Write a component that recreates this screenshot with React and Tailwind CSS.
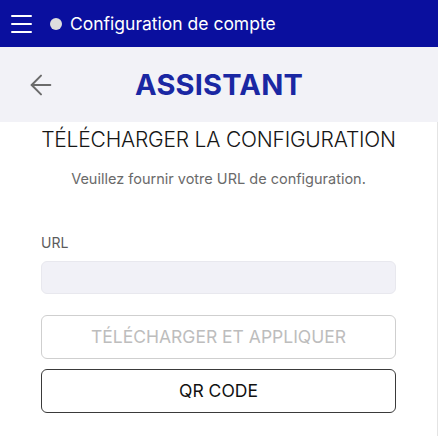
import React from 'react';
import { ArrowLeft } from 'lucide-react';

const App = () => {
  return (
    <div className="w-[438px] h-[436px] bg-white overflow-hidden font-['Inter',sans-serif]">
      {/* top app bar */}
      <div className="h-[47px] bg-[#0a0f9e] flex items-center px-[11px]">
        <div className="flex flex-col gap-[6px] w-[21px]">
          <span className="h-[2px] bg-white rounded-full" />
          <span className="h-[2px] bg-white rounded-full" />
          <span className="h-[2px] bg-white rounded-full" />
        </div>
        <span className="ml-[18px] w-[12px] h-[12px] rounded-full bg-[#dedede]" />
        <span className="ml-[8px] text-white text-[17.5px] leading-none">Configuration de compte</span>
      </div>

      {/* assistant bar */}
      <div className="h-[75px] bg-[#f2f2f7] relative flex items-center justify-center">
        <ArrowLeft className="absolute left-[25px] top-1/2 -translate-y-1/2 text-[#6b6b6b]" size={32} strokeWidth={1.5} />
        <h1 className="text-[#1a27a3] text-[29px] font-bold tracking-[0.2px] leading-none">ASSISTANT</h1>
      </div>

      {/* content */}
      <div className="h-[314px] border-r border-[#e4e4e4] px-[41px] flex flex-col">
        <h2 className="text-center text-[#161616] text-[21px] font-light leading-[36px] tracking-[-0.2px] whitespace-nowrap">
          TÉLÉCHARGER LA CONFIGURATION
        </h2>
        <p className="mt-[11px] text-center text-[#6a6a6a] text-[14.5px] leading-[20px]">
          Veuillez fournir votre URL de configuration.
        </p>
        <label className="mt-[44px] text-[#5c5c5c] text-[14px] leading-[20px]">URL</label>
        <input
          type="text"
          className="mt-[8px] h-[33px] w-full rounded-[6px] bg-[#f1f1f7] border border-[#e8e8ee] outline-none px-3"
        />
        <button className="mt-[21px] h-[44px] w-full rounded-[6px] border border-[#cfcfcf] text-[#bdbdbd] text-[17.5px] bg-white">
          TÉLÉCHARGER ET APPLIQUER
        </button>
        <button className="mt-[10px] h-[44px] w-full rounded-[6px] border-[1.5px] border-[#3a3a3a] text-[#111] text-[17.5px] bg-white">
          QR CODE
        </button>
      </div>
    </div>
  );
};

export default App;
